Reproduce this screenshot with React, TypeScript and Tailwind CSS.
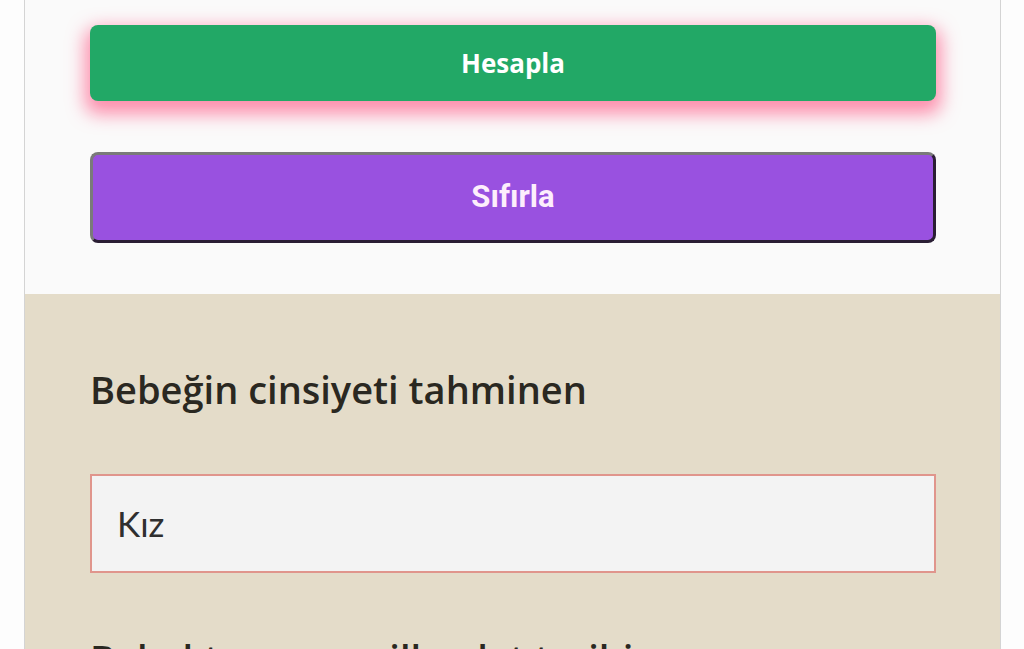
export default function App() {
  return (
    <div className="h-[649px] overflow-hidden bg-[#fdfdfd]">
      <div className="ml-[24px] mr-[23px] border-x border-[#d4d4d4]">
        {/* buttons */}
        <section className="bg-[#fafafa] pl-[65px] pr-[64px] pt-[25px] pb-[51px] flex flex-col gap-[51px]">
          <button
            type="button"
            className="h-[76px] w-full rounded-[8px] bg-[#22a866] text-white text-[26px] font-bold shadow-[0_8px_18px_5px_rgba(255,70,120,0.6)] font-['Open_Sans',sans-serif]"
          >
            Hesapla
          </button>
          <button
            type="button"
            className="h-[91px] w-full rounded-[8px] bg-[#9951e0] border-[3px] border-t-[#7a7a7a] border-l-[#7a7a7a] border-r-[#2a1e34] border-b-[#2a1e34] text-[#fdeefc] text-[31px] font-bold font-['Roboto',sans-serif]"
          >
            Sıfırla
          </button>
        </section>

        {/* form */}
        <section className="bg-[#e4dcc9] pl-[65px] pr-[64px] pt-[70px]">
          <h2 className="text-[38px] leading-[50px] font-semibold text-[#2a2821] font-['Open_Sans',sans-serif]">Bebeğin cinsiyeti tahminen</h2>
          <div className="mt-[60px] h-[99px] border-2 border-[#e0958c] bg-[#f3f3f3] flex items-center px-[25px] text-[35px] text-[#2f2f2f] font-['Lato',sans-serif]">
            Kız
          </div>
          <h2 className="mt-[60px] text-[38px] leading-[50px] font-semibold text-[#2a2821] font-['Open_Sans',sans-serif]">Bebekten sonra ilk adet tarihi</h2>
        </section>
      </div>
    </div>
  );
}
